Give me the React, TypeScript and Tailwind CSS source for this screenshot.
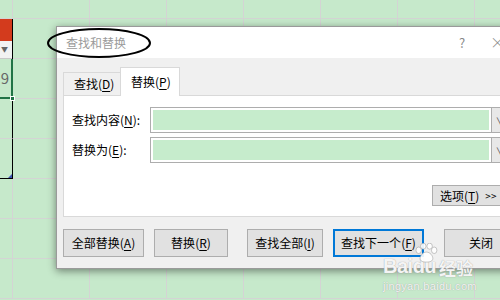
import React from 'react';

const font = "font-['Noto_Sans_CJK_SC','Noto_Sans',sans-serif]";

function Key({ k }: { k: string }) {
  return (
    <>
      (<span className="underline underline-offset-2">{k}</span>)
    </>
  );
}

function Btn({ w, children, focus }: { w: string; children: React.ReactNode; focus?: boolean }) {
  return (
    <div
      className={`${w} h-[28px] shrink-0 flex items-center justify-center bg-[#e1e1e1] text-[12px] text-black ${
        focus ? 'border-2 border-[#0078d7]' : 'border border-[#adadad]'
      }`}
    >
      {children}
    </div>
  );
}

function Field({ label }: { label: React.ReactNode }) {
  return (
    <div className="flex items-center h-[26px]">
      <div className="w-[78px] shrink-0 text-[12px] text-black">{label}</div>
      <div className="flex-1 h-full flex border border-[#adadad] bg-white">
        <div className="flex-1 m-[2px] bg-[#c6eccc]" />
        <div className="w-[18px] border-l border-[#adadad] bg-[#e8e8e8] flex items-center justify-center text-[10px] text-[#555]">
          ∨
        </div>
      </div>
    </div>
  );
}

export default function App() {
  const cells = Array.from({ length: 8 * 8 });

  return (
    <div className={`relative w-[500px] h-[300px] overflow-hidden bg-[#c6e9cb] ${font}`}>
      {/* spreadsheet behind */}
      <div className="grid grid-cols-[13px_repeat(7,77px)] grid-rows-[19px_repeat(7,40px)]">
        {cells.map((_, i) => {
          const row = Math.floor(i / 8);
          const col = i % 8;
          if (col === 0 && row === 1) {
            return (
              <div key={i} className="flex flex-col border-r border-black">
                <div className="h-[22px] bg-[#d33b1d]" />
                <div className="flex-1 bg-[#f2f2f2] border-b border-[#c8c8c8] flex items-center pl-[1px] text-[7px] text-[#666]">
                  ▼
                </div>
              </div>
            );
          }
          if (col === 0 && row === 2) {
            return (
              <div
                key={i}
                className="relative border-r-2 border-b-2 border-[#217346] flex items-center justify-end pr-[2px] text-[15px] text-[#666]"
              >
                9
                <div className="absolute right-[-4px] bottom-[-4px] w-[5px] h-[5px] bg-[#217346] border border-white" />
              </div>
            );
          }
          if (col === 0 && row === 3) {
            return <div key={i} className="border-r border-black border-b border-b-[#d4d4d4]" />;
          }
          if (col === 0 && row === 4) {
            return (
              <div key={i} className="relative border-r border-b border-black">
                <div className="absolute right-0 bottom-0 w-0 h-0 border-l-[4px] border-l-transparent border-b-[4px] border-b-[#3b4fb0]" />
              </div>
            );
          }
          return <div key={i} className="border-r border-b border-[#d4d4d4]" />;
        })}
      </div>

      {/* dialog */}
      <div className="absolute left-[56px] top-[26px] w-[470px] h-[243px] flex flex-col bg-white border border-[#9a9a9a] shadow-[0_2px_8px_rgba(0,0,0,0.45)]">
        {/* title bar */}
        <div className="relative h-[31px] flex items-center pl-[9px] pr-[20px] bg-white">
          <span className="text-[12px] text-[#9a9a9a]">查找和替换</span>
          <div className="ml-auto w-[46px] flex items-center text-[13px] text-[#888]">
            <span>?</span>
            <span className="ml-auto text-[15px] font-light">×</span>
          </div>
          <svg className="absolute left-[-10px] top-0" width="106" height="32" viewBox="0 0 106 32">
            <ellipse cx="52" cy="16" rx="51" ry="14" fill="none" stroke="#000" strokeWidth="2" />
          </svg>
        </div>

        {/* body */}
        <div className="flex-1 flex flex-col bg-[#f0f0f0] pl-[6px] pt-[9px]">
          <div className="flex items-end h-[28px]">
            <div className="w-[57px] h-[23px] pl-[10px] flex items-center border-t border-l border-[#d9d9d9] bg-[#f0f0f0] text-[12px] text-black">
              查找<Key k="D" />
            </div>
            <div className="w-[60px] h-[29px] mb-[-1px] pl-[10px] flex items-center border-t border-l border-r border-[#d9d9d9] bg-white text-[12px] text-black relative z-10">
              替换<Key k="P" />
            </div>
          </div>

          <div className="h-[122px] bg-white border border-[#d9d9d9] pl-[8px] pr-[14px] pt-[11px] flex flex-col gap-[4px]">
            <Field label={<>查找内容<Key k="N" />:</>} />
            <Field label={<>替换为<Key k="E" />:</>} />
            <div className="flex justify-end mt-[18px]">
              <div className="w-[80px] h-[21px] flex items-center pl-[7px] bg-[#e1e1e1] border border-[#adadad] text-[12px] text-black whitespace-nowrap mr-[-2px]">
                选项<Key k="T" />
                <span className="ml-[6px] text-[10px]">&gt;&gt;</span>
              </div>
            </div>
          </div>

          <div className="flex mt-[12px]">
            <Btn w="w-[81px]">全部替换<Key k="A" /></Btn>
            <div className="w-[10px]" />
            <Btn w="w-[74px]">替换<Key k="R" /></Btn>
            <div className="w-[19px]" />
            <Btn w="w-[76px]">查找全部<Key k="I" /></Btn>
            <div className="w-[10px]" />
            <Btn w="w-[91px]" focus>
              查找下一个<Key k="F" />
            </Btn>
            <div className="w-[20px]" />
            <Btn w="w-[74px]">关闭</Btn>
          </div>
        </div>
      </div>

      {/* watermark */}
      <div className="absolute left-[383px] top-[256px] flex flex-col text-white/90 [text-shadow:0_0_1px_#8a8a8a]">
        <div className="relative flex items-end leading-none">
          <span className="text-[20px] font-bold font-['Liberation_Sans',sans-serif] tracking-tight">Bai</span>
          <span className="text-[20px] font-bold font-['Liberation_Sans',sans-serif] tracking-tight">du</span>
          <span className="ml-[3px] text-[17px] font-bold">经验</span>
          <svg className="absolute left-[30px] top-[-13px]" width="26" height="20" viewBox="0 0 28 22">
            <g fill="#fff" fillOpacity="0.9" stroke="#9a9a9a" strokeWidth="0.6">
              <ellipse cx="6" cy="8" rx="3" ry="3.6" />
              <ellipse cx="11" cy="3.5" rx="3" ry="3.3" />
              <ellipse cx="18" cy="3.5" rx="3" ry="3.3" />
              <ellipse cx="23" cy="8" rx="3" ry="3.6" />
              <path d="M14.5 10c-4 0-7 4-7 7s3 4 7 4 7-1 7-4-3-7-7-7z" />
            </g>
          </svg>
        </div>
        <div className="text-[11px] leading-none mt-[5px] font-['Liberation_Sans',sans-serif] tracking-[0.3px]">
          jingyan.baidu.com
        </div>
      </div>
    </div>
  );
}
